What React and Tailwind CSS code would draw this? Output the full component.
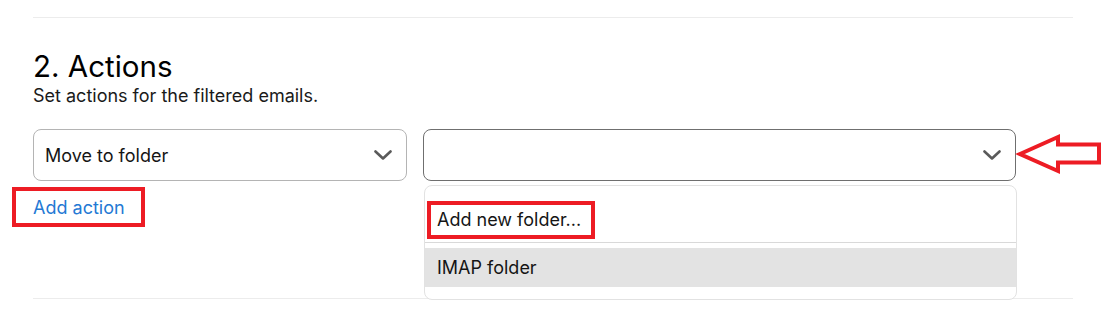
import React from 'react';

const Chevron = () => (
  <svg width="18" height="10" viewBox="0 0 18 10" fill="none">
    <path d="M1.5 1.5 L9 8.5 L16.5 1.5" stroke="#5a5a5a" strokeWidth="2.6" strokeLinecap="round" strokeLinejoin="round" />
  </svg>
);

const App = () => {
  return (
    <div className="relative w-[1103px] h-[319px] overflow-hidden bg-white text-[#151515] font-['Inter',sans-serif]">
      <div className="ml-[33px] w-[1040px] pt-[17px]">
        <div className="h-px bg-[#ececec]"></div>

        {/* --- Section: Actions --- */}
        <div className="mt-[30px]">
          <h2 className="text-[29.5px] leading-[36px] font-normal text-black">2. Actions</h2>
          <p className="mt-[1px] text-[18px] leading-[22px] text-[#1a1a1a]">Set actions for the filtered emails.</p>

          <div className="mt-[22px] flex gap-4">
            <div className="w-[374px] h-[52px] flex items-center justify-between pl-[11px] pr-[14px] rounded-lg border border-[#b4b4b4]">
              <span className="text-[18px]">Move to folder</span>
              <Chevron />
            </div>
            <div className="relative w-[593px] h-[52px] flex items-center justify-end pr-[14px] rounded-lg border border-[#6f6f6f]">
              <Chevron />

              {/* Open dropdown list */}
              <div className="absolute left-0 top-[55px] w-[593px] rounded-lg border border-[#e2e2e2] bg-white pt-[14px] pb-[12px] z-10">
                <div className="h-[39px] flex items-center px-3 text-[18px]">Add new folder...</div>
                <div className="mt-[3px] h-px bg-[#d9d9d9]"></div>
                <div className="mt-[5px] h-[39px] flex items-center px-3 text-[18px] bg-[#e3e3e3]">IMAP folder</div>
              </div>
            </div>
          </div>

          <div className="mt-[15px] text-[18px] leading-[24px] text-[#2479d4]">Add action</div>
        </div>

        <div className="mt-[78px] h-px bg-[#ececec]"></div>
      </div>

      {/* --- Annotations --- */}
      <div className="absolute left-[12px] top-[187px] w-[133px] h-[40px] border-4 border-[#ed1c24]"></div>
      <div className="absolute left-[427px] top-[201px] w-[168px] h-[38px] border-4 border-[#ed1c24] z-20"></div>
      <svg className="absolute left-[1014px] top-[132px]" width="89" height="44" viewBox="0 0 89 44" fill="none">
        <path d="M6 22 L44 5 L44 12.5 L85 12.5 L85 30.5 L44 30.5 L44 39 Z" stroke="#ed1c24" strokeWidth="4" strokeLinejoin="miter" />
      </svg>
    </div>
  );
};

export default App;
